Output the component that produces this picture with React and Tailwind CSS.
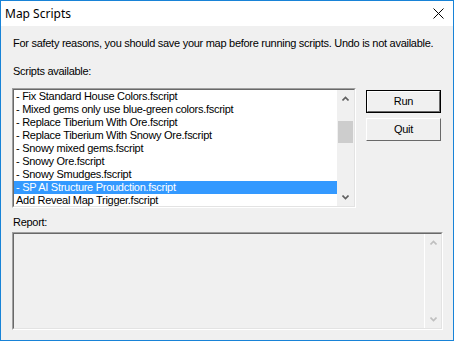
import React from "react";

const scripts = [
  "- Fix Standard House Colors.fscript",
  "- Mixed gems only use blue-green colors.fscript",
  "- Replace Tiberium With Ore.fscript",
  "- Replace Tiberium With Snowy Ore.fscript",
  "- Snowy mixed gems.fscript",
  "- Snowy Ore.fscript",
  "- Snowy Smudges.fscript",
  "- SP AI Structure Proudction.fscript",
  "Add Reveal Map Trigger.fscript",
];

function Chevron({ up, color }) {
  return (
    <svg width="7" height="5" viewBox="0 0 7 5" className="block">
      <path
        d={up ? "M0.5 4.5 L3.5 1.5 L6.5 4.5" : "M0.5 0.5 L3.5 3.5 L6.5 0.5"}
        fill="none"
        stroke={color}
        strokeWidth="1.6"
      />
    </svg>
  );
}

function Sunken({ className, children }) {
  // classic 3D sunken edge
  return (
    <div className={`border border-t-[#a0a0a0] border-l-[#a0a0a0] border-r-white border-b-white ${className}`}>
      <div className="flex h-full border border-t-[#696969] border-l-[#696969] border-r-[#e3e3e3] border-b-[#e3e3e3]">
        {children}
      </div>
    </div>
  );
}

export default function App() {
  const selected = 7;

  return (
    <div
      className="flex h-[341px] w-[454px] flex-col border border-[#1883d7] bg-[#f0f0f0] text-[11px] tracking-[-0.28px] text-black"
      style={{ fontFamily: '"Liberation Sans", Arial, sans-serif' }}
    >
      {/* TITLE BAR */}
      <div className="flex h-[25px] shrink-0 items-center justify-between bg-white pl-[4px] pr-[9px] tracking-normal">
        <span className="text-[12px]" style={{ fontFamily: '"Noto Sans", "Open Sans", sans-serif' }}>
          Map Scripts
        </span>
        <svg width="11" height="11" viewBox="0 0 11 11">
          <path d="M0.5 0.5 L10.5 10.5 M10.5 0.5 L0.5 10.5" stroke="#000" strokeWidth="1" />
        </svg>
      </div>

      {/* BODY */}
      <div className="flex flex-1 flex-col px-[11px]">
        <p className="mt-[11px] whitespace-nowrap pl-[1px] leading-[13px]">
          For safety reasons, you should save your map before running scripts. Undo is not available.
        </p>
        <p className="mt-[15px] pl-[1px] leading-[13px]">Scripts available:</p>

        <div className="mt-[10px] flex gap-[10px]">
          {/* LISTBOX */}
          <Sunken className="h-[120px] w-[344px]">
            <div className="flex-1 overflow-hidden bg-white">
              {scripts.map((s, i) => (
                <div
                  key={s}
                  className={`h-[13px] whitespace-nowrap pl-[2px] leading-[13px] ${
                    i === selected ? "bg-[#3399ff] text-white" : ""
                  }`}
                >
                  {s}
                </div>
              ))}
            </div>
            {/* SCROLLBAR */}
            <div className="flex w-[17px] flex-col bg-[#f0f0f0]">
              <div className="flex h-[17px] items-center justify-center">
                <Chevron up color="#606060" />
              </div>
              <div className="flex-1 pt-[14px]">
                <div className="mx-[1px] h-[22px] bg-[#cdcdcd]" />
              </div>
              <div className="flex h-[17px] items-center justify-center">
                <Chevron color="#606060" />
              </div>
            </div>
          </Sunken>

          {/* BUTTONS */}
          <div className="mt-[2px] flex flex-col gap-[5px]">
            <button className="h-[23px] w-[75px] border border-[#000000] bg-[#f0f0f0]">
              <div className="flex h-full items-center justify-center border border-t-white border-l-white border-r-[#696969] border-b-[#696969]">
                Run
              </div>
            </button>
            <button className="flex h-[23px] w-[75px] items-center justify-center border border-t-white border-l-white border-r-[#696969] border-b-[#696969] bg-[#f0f0f0]">
              Quit
            </button>
          </div>
        </div>

        <p className="mt-[8px] pl-[1px] leading-[13px]">Report:</p>

        {/* REPORT */}
        <Sunken className="mt-[3px] h-[98px] w-[431px]">
          <div className="flex-1 bg-[#f0f0f0]" />
          <div className="flex w-[17px] flex-col justify-between border-l border-white bg-[#f0f0f0]">
            <div className="flex h-[17px] items-center justify-center">
              <Chevron up color="#bfbfbf" />
            </div>
            <div className="flex h-[17px] items-center justify-center">
              <Chevron color="#bfbfbf" />
            </div>
          </div>
        </Sunken>
      </div>
    </div>
  );
}
